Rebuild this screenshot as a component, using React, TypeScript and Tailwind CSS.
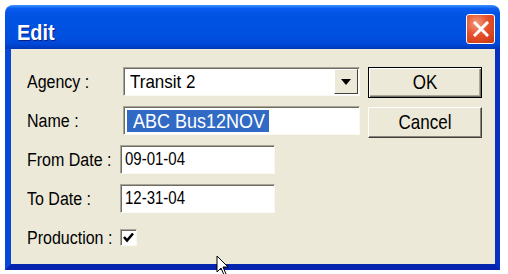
const FONT = { fontFamily: '"Liberation Sans", Arial, sans-serif' };

function Field({ w, children }: { w: string; children?: React.ReactNode }) {
  return (
    <div
      className={`${w} h-[29px] bg-white border border-t-[#a8a598] border-l-[#a8a598] border-r-[#fbf8f2] border-b-[#fbf8f2] shadow-[inset_1px_1px_0_#6f6d62] flex items-center`}
    >
      {children}
    </div>
  );
}

function XPButton({ label, isDefault }: { label: string; isDefault?: boolean }) {
  return (
    <button
      className={`h-[31px] w-[114px] bg-[#ece9d8] text-[17px] text-black flex items-center justify-center ${
        isDefault
          ? "border border-black shadow-[inset_1px_1px_0_#fff,inset_-1px_-1px_0_#716f64,inset_-2px_-2px_0_#aca899]"
          : "border border-t-white border-l-white border-r-[#404040] border-b-[#404040] shadow-[inset_-1px_-1px_0_#8a877a]"
      }`}
    >
      <span className="inline-block scale-y-[1.15]">{label}</span>
    </button>
  );
}

export default function App() {
  return (
    <div className="relative w-[508px] h-[274px] bg-white pt-[5px] pl-[5px] overflow-hidden" style={FONT}>
      <div className="w-[495px] h-[265px] flex flex-col rounded-t-[8px] overflow-hidden">
        {/* title bar */}
        <div className="h-[44px] flex items-start justify-between pl-[12px] pr-[5px] bg-[linear-gradient(to_bottom,#3d93ff_0%,#0a5cf0_8%,#0054e3_20%,#0050e0_70%,#0048d8_88%,#0038b8_100%)]">
          <span className="mt-[12px] inline-block scale-y-[1.1] text-[20px] font-bold text-white [text-shadow:1px_1px_0_#0a1c80]">Edit</span>
          <div className="mt-[9px] w-[29px] h-[30px] rounded-[3px] border border-white bg-[radial-gradient(circle_at_35%_30%,#f29c7e_0%,#e5512b_45%,#c9360e_100%)] flex items-center justify-center">
            <svg width="16" height="16" viewBox="0 0 16 16">
              <path d="M2 2 L14 14 M14 2 L2 14" stroke="white" strokeWidth="3" strokeLinecap="square" />
            </svg>
          </div>
        </div>

        {/* body */}
        <div className="flex-1 bg-[#ece9d8] border-l-[6px] border-r-[5px] border-b-[6px] border-l-[#0848d8] border-r-[#0730c0] border-b-[#0525b0] flex pl-[16px] pt-[18px] text-black">
          <div className="w-[333px] flex flex-col gap-[10px] text-[16px]">
            <div className="h-[29px] flex items-center">
              <span className="w-[96px] inline-block scale-y-[1.15] origin-left">Agency :</span>
              <Field w="w-[237px]">
                <span className="pl-[6px] text-[17px] flex-1 inline-block scale-y-[1.12]">Transit 2</span>
                <div className="w-[24px] h-[25px] mr-[1px] bg-[#ece9d8] border border-t-white border-l-white border-r-[#404040] border-b-[#404040] flex items-center justify-center">
                  <svg width="10" height="6" viewBox="0 0 10 6">
                    <path d="M0 0 H10 L5 6 Z" fill="black" />
                  </svg>
                </div>
              </Field>
            </div>
            <div className="h-[29px] flex items-center">
              <span className="w-[96px] inline-block scale-y-[1.15] origin-left">Name :</span>
              <Field w="w-[237px]">
                <span className="ml-[3px] h-[22px] pl-[6px] pr-[4px] bg-[#316ac5] text-white text-[18px] leading-[22px]">
                  <span className="inline-block scale-y-[1.1]">ABC Bus12NOV</span>
                </span>
              </Field>
            </div>
            <div className="h-[29px] flex items-center">
              <span className="w-[93px] inline-block scale-y-[1.15] origin-left">From Date :</span>
              <Field w="w-[155px]">
                <span className="pl-[4px] text-[15px] inline-block scale-y-[1.2]">09-01-04</span>
              </Field>
            </div>
            <div className="h-[29px] flex items-center">
              <span className="w-[93px] inline-block scale-y-[1.15] origin-left">To Date :</span>
              <Field w="w-[155px]">
                <span className="pl-[4px] text-[15px] inline-block scale-y-[1.2]">12-31-04</span>
              </Field>
            </div>
            <div className="h-[29px] flex items-center">
              <span className="w-[93px] inline-block scale-y-[1.15] origin-left">Production :</span>
              <div className="w-[17px] h-[17px] bg-white border border-t-[#a8a598] border-l-[#a8a598] border-r-[#fbf8f2] border-b-[#fbf8f2] shadow-[inset_1px_1px_0_#6f6d62] flex items-center justify-center">
                <svg width="11" height="11" viewBox="0 0 11 11">
                  <path d="M1 5 L4 8.5 L10 1.5" fill="none" stroke="black" strokeWidth="2.6" />
                </svg>
              </div>
            </div>
          </div>
          <div className="ml-[8px] flex flex-col gap-[9px]">
            <XPButton label="OK" isDefault />
            <XPButton label="Cancel" />
          </div>
        </div>
      </div>

      {/* mouse pointer */}
      <svg className="absolute left-[216px] top-[255px]" width="16" height="22" viewBox="0 0 16 22">
        <path d="M1 1 L1 17 L5 13 L8 20 L10 19 L7 12 L12 12 Z" fill="white" stroke="black" strokeWidth="1" />
      </svg>
    </div>
  );
}
